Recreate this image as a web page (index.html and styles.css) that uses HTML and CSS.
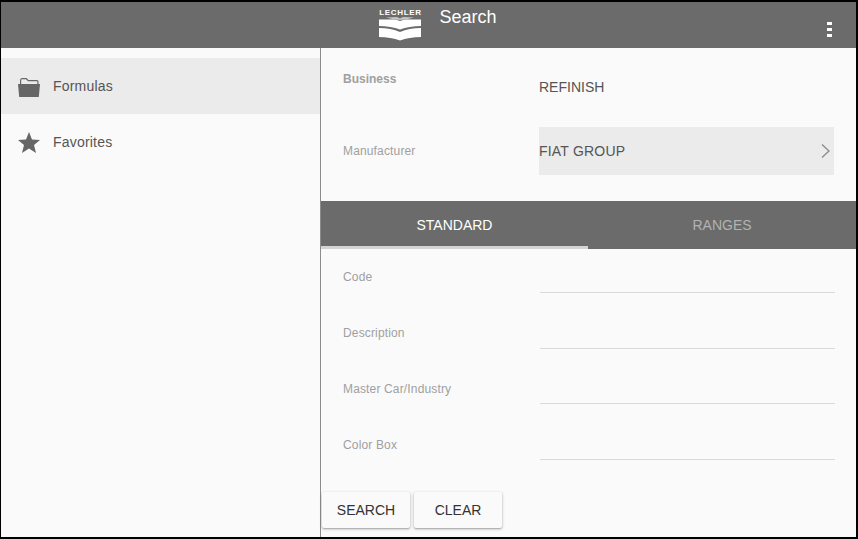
FILE: index.html
```html
<!DOCTYPE html>
<html lang="en">
<head>
<meta charset="utf-8">
<title>Search</title>
<link rel="stylesheet" href="styles.css">
</head>
<body>
<div class="window">
  <header class="toolbar">
    <div class="brand">
      <div class="logo">
        <span class="logo-name">LECHLER</span>
        <svg class="logo-mark" width="42" height="24" viewBox="0 0 42 24">
          <path fill="#c4c4c4" d="M7 0.500 L18 0 L21 1.500 L24 0 L35 0.500 L27 2.500 L21 3 L15 2.500 Z"/>
          <path fill="#fff" d="M0 2.500 L14 2.500 Q18 2.500 21 4 Q24 2.500 28 2.500 L42 2.500 L42 9 Q30 9 21 12.500 Q12 9 0 9 Z"/>
          <path fill="#fff" d="M0 11 Q12 11 21 15 Q30 11 42 11 L42 20 Q30 20 21 23.500 Q12 20 0 20 Z"/>
        </svg>
      </div>
      <h1 class="title">Search</h1>
    </div>
    <div class="menu" aria-label="More"><i></i><i></i><i></i></div>
  </header>
  <div class="body">
    <nav class="sidebar">
      <a class="nav-item active">
        <svg class="nav-icon" width="24" height="24" viewBox="0 0 24 24"><path fill="#666" d="M3 6.500 Q3 4 5 4 L9.500 4 L11.500 6 L20 6 Q21.500 6 21.500 7.500 L21.500 10 L20.300 10 L20.300 7.500 Q20.300 7.200 20 7.200 L11 7.200 L9 5.200 L5 5.200 Q4.200 5.200 4.200 6.500 L4.200 10 L3 10 Z"/><path fill="#666" d="M1 10 L23 10 L21.800 23 L2.200 23 Z"/></svg>
        <span>Formulas</span>
      </a>
      <a class="nav-item">
        <svg class="nav-icon" width="24" height="24" viewBox="0 0 24 24"><path fill="#666" d="M12 2 L15 9.500 L23 10 L17 15 L19 23 L12 18.500 L5 23 L7 15 L1 10 L9 9.500 Z"/></svg>
        <span>Favorites</span>
      </a>
    </nav>
    <main class="content">
      <div class="row row-business">
        <span class="label label-strong">Business</span>
        <span class="value">REFINISH</span>
      </div>
      <div class="row row-manufacturer">
        <span class="label">Manufacturer</span>
        <div class="select">
          <span>FIAT GROUP</span>
          <svg width="12" height="16" viewBox="0 0 12 16"><path fill="none" stroke="#8a8a8a" stroke-width="1.300" d="M2 1.500 L9 8 L2 14.500"/></svg>
        </div>
      </div>
      <div class="tabs">
        <div class="tab selected">STANDARD</div>
        <div class="tab">RANGES</div>
      </div>
      <div class="fields">
        <div class="field"><span class="label">Code</span><div class="input"></div></div>
        <div class="field"><span class="label">Description</span><div class="input"></div></div>
        <div class="field"><span class="label">Master Car/Industry</span><div class="input short"></div></div>
        <div class="field"><span class="label">Color Box</span><div class="input short"></div></div>
      </div>
      <div class="actions">
        <button class="btn">SEARCH</button>
        <button class="btn">CLEAR</button>
      </div>
    </main>
  </div>
</div>
</body>
</html>
```
FILE: styles.css
```css
* { box-sizing: border-box; }
html, body { margin: 0; height: 100%; overflow: hidden; }
body { background: #000; font-family: "Liberation Sans", Arial, sans-serif; }
.window {
  width: 858px; height: 539px;
  padding: 2px 2px 2px 1px;
  display: flex; flex-direction: column;
}
.toolbar {
  height: 46px; flex: none;
  background: #6b6b6b; color: #fff;
  display: flex; align-items: flex-start; justify-content: center;
  position: relative;
}
.brand { display: flex; align-items: flex-start; margin-left: 19px; }
.logo { width: 42px; margin-top: 7px; display: flex; flex-direction: column; align-items: center; }
.logo-name { font-weight: 700; font-size: 8px; line-height: 8px; height: 8px; letter-spacing: 0.700px; white-space: nowrap; }
.logo-mark { display: block; flex: none; }
.title { margin: 4px 0 0 18px; font-size: 18px; line-height: 22px; font-weight: 400; }
.menu {
  position: absolute; right: 24px; top: 20px;
  display: flex; flex-direction: column; gap: 3px;
}
.menu i { display: block; width: 5px; height: 3px; background: #fff; }
.body { flex: 1; display: flex; min-height: 0; background: #fafafa; }
.sidebar {
  width: 320px; flex: none;
  padding-top: 10px;
  border-right: 1px solid #8c8c8c;
}
.nav-item {
  height: 56px;
  display: flex; align-items: center; gap: 12px;
  padding-left: 16px;
  color: #555; font-size: 14px; letter-spacing: 0.200px;
}
.nav-item.active { background: #ebebeb; }
.nav-icon { flex: none; }
.content { flex: 1; min-width: 0; display: flex; flex-direction: column; }
.row, .field { display: flex; padding-left: 22px; }
.label { width: 196px; flex: none; font-size: 12px; color: #a0a0a0; letter-spacing: 0.150px; }
.label-strong { font-weight: 700; letter-spacing: 0; }
.row-business { height: 79px; padding-top: 24px; }
.value { font-size: 14px; color: #555; padding-top: 7px; }
.row-manufacturer { height: 74px; }
.row-manufacturer .label { padding-top: 17px; }
.select {
  width: 295px; height: 48px;
  background: #ebebeb; color: #555; font-size: 14px; letter-spacing: 0.200px;
  display: flex; align-items: center; justify-content: space-between;
  padding-right: 2px;
}
.tabs { display: flex; height: 48px; background: #6b6b6b; flex: none; }
.tab {
  flex: 1; display: flex; align-items: center; justify-content: center;
  font-size: 14px; color: #b2b2b2;
}
.tab.selected { flex: 0 0 267px; color: #fff; border-bottom: 3px solid #d4d4d4; padding-top: 3px; }
.fields { height: 243px; }
.field { height: 56px; padding-top: 21px; }
.input { width: 295px; height: 23px; border-bottom: 1px solid #d9d9d9; margin-left: 1px; }
.input.short { height: 22px; }
.actions { display: flex; gap: 4px; padding-left: 1px; }
.btn {
  width: 88px; height: 36px;
  border: 0; border-radius: 2px; background: #fafafa;
  color: #333; font-family: inherit; font-size: 14px;
  box-shadow: 0 1px 3px rgba(0,0,0,.3), 0 1px 1px rgba(0,0,0,.12);
  padding: 0;
}
```
